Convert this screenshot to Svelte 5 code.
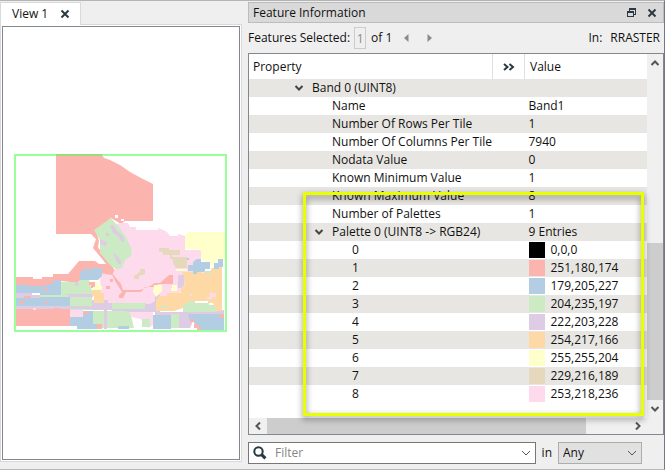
<script lang="ts">
	type Row = {
		name: string;
		value?: string;
		level: number;
		open?: boolean;
		color?: string;
	};

	const palette = [
		'0,0,0',
		'251,180,174',
		'179,205,227',
		'204,235,197',
		'222,203,228',
		'254,217,166',
		'255,255,204',
		'229,216,189',
		'253,218,236'
	];

	const rows: Row[] = [
		{ name: 'Band 0 (UINT8)', level: 1, open: true },
		{ name: 'Name', value: 'Band1', level: 2 },
		{ name: 'Number Of Rows Per Tile', value: '1', level: 2 },
		{ name: 'Number Of Columns Per Tile', value: '7940', level: 2 },
		{ name: 'Nodata Value', value: '0', level: 2 },
		{ name: 'Known Minimum Value', value: '1', level: 2 },
		{ name: 'Known Maximum Value', value: '8', level: 2 },
		{ name: 'Number of Palettes', value: '1', level: 2 },
		{ name: 'Palette 0 (UINT8 -> RGB24)', value: '9 Entries', level: 2, open: true },
		...palette.map((rgb, i) => ({ name: String(i), value: rgb, level: 3, color: `rgb(${rgb})` }))
	];

	let selected = $state('1');
	let filter = $state('');
	let scope = $state('Any');
</script>

{#snippet chevron(cls: string, d: string)}
	<svg class="line {cls}" width="10" height="10" viewBox="0 0 10 10" aria-hidden="true">
		<path {d} />
	</svg>
{/snippet}

<main class="workspace">
	<section class="view">
		<div class="tabs">
			<div class="tab">
				<span>View 1</span>
				<button class="icon" aria-label="Close view">
					<svg class="line" width="10" height="10" viewBox="0 0 10 10">
						<path d="M1.5 1.5 8.5 8.5M8.5 1.5 1.5 8.5" />
					</svg>
				</button>
			</div>
		</div>
		<div class="pane">
			<div class="canvas">
				<svg class="map" viewBox="14 153 213 178" role="img" aria-label="Raster preview">
					<!-- outlying land -->
					<path
						fill="#fbb4ae"
						d="M56 154H102L104 157 110 159 120 164 130 171 141 177 153 183V220H125L121 223 111 217 96 230 99 240 98 246 104 256 112 265 118 274 105 276 96 270 82 282 61 280 46 286H16V276H33V278H42V276H53V273H68L74 266 79 260H95L99 263H106L103 259 93 247 96 238 91 233H56Z"
					/>
					<path fill="#fddaec" d="M112 225 120 222H128L130 226H136V229H158V227L163 229 167 231 170 235H178V233L185 235V249H201V262L205 270 185 290 160 298 155 310H112L101 298 100 272 112 274 116 266Z" />
					<path fill="#ccebc5" d="M94 229 111 217 119 226 126 236 132 249 131 255 125 259 122 267 116 268 110 264 100 252V239Z" />
					<path fill="#decbe4" d="M110 224H113L117 230 122 234 125 241H122L118 235 113 232ZM100 238 107 241 106 245 100 243ZM113 252H115L121 260V263H118ZM106 232H109V235H106Z" />
					<path fill="#fff" d="M115 214H118V217H115ZM121 218H124V220H121Z" />
					<path fill="#ffffcc" d="M185 235 188 231H225V260H215V264H209L204 259H201V250L196 248H185Z" />

					<!-- west -->
					<path fill="#b3cde3" d="M16 284H28V285H46V283H53V279H61V294H40V292H16ZM16 296H70V307H16ZM80 271 84 269V267L90 269 92 267H102V275L98 279H80Z" />
					<path fill="#ccebc5" d="M61 281H77L80 279H89L92 290V309H70V296H61ZM38 294H61V296H38Z" />
					<path fill="#decbe4" d="M16 292H32V294H40V297H16ZM66 293H93V296H69V294H66ZM16 305H92V308H16ZM92 299H108V302H112V309H92ZM75 281H78V285H75Z" />
					<path fill="#fbb4ae" d="M16 308H54V307H60V308H70V325H16ZM45 286H47V291H45ZM24 295H31V297H24ZM20 300H24V303H20ZM45 300H48V302H45ZM89 281H95V287H91V284H89Z" />
					<path fill="#b3cde3" d="M70 316H83V310H93V323H97V328H77V325H70Z" />
					<path fill="#fddaec" d="M70 309H83V316H70ZM33 307H36V309H33Z" />
					<path fill="#fbb4ae" d="M84 310H88V313H84ZM45 323H52V325H45ZM110 278H113V281H110ZM106 285H110V288H106ZM111 271 121 283 123 289H140L150 285 155 282H160L169 274H173V283H158L156 286H145L141 291H126L123 297H119V294L122 291 115 280Z" />
					<path fill="#ffffcc" d="M95 281H99V285H102V289H93V286H95Z" />
					<path fill="#fed9a6" d="M92 289H101V292H104V302H94V295H92Z" />

					<!-- south -->
					<path fill="#ccebc5" d="M93 310H130L134 327H97V323H93ZM112 302H146L150 306V308H112Z" />
					<path fill="#decbe4" d="M104 308H107V328H104ZM112 308H145V303H150L155 300V294H160V311H183V309H224V316H195L190 327H178V314H155V311H128L125 310H112Z" />
					<path fill="#fddaec" d="M129 311H153V324L148 327 145 320 140 318 132 316Z" />
					<path fill="#ccebc5" d="M142 318H150V326H142ZM171 313H179V327H171Z" />
					<path fill="#b3cde3" d="M118 325H129V328H118ZM153 314H171V328H153Z" />
					<path fill="#fbb4ae" d="M97 323H102V328H97Z" />

					<!-- east -->
					<path fill="#fed9a6" d="M182 271H201V272H209L212 267 222 265V310H216L213 302H208V300H188V306L180 308 174 310H156V299L159 295H167V292H181V288L185 283Z" />
					<path fill="#decbe4" d="M178 274H184V284L181 287H178Z" />
					<path fill="#ffffcc" d="M154 284H162V290L156 296 153 291ZM172 284H177V290H171V287H172ZM176 268H187V270H176Z" />
					<path fill="#b3cde3" d="M186 257H189V259H186ZM193 261 197 258H201V261H210V268H205V271H197V273H193V270H188V264H193ZM214 262H218V258H223V266H219V268H214Z" />
					<path fill="#e5d8bd" d="M159 247H169V249H180V254H172V256H187V267H175V264H173V259L170 257V254H163V251H159ZM134 275 140 271V268H145V273L139 275V278H134Z" />
					<path fill="#ccebc5" d="M183 304 188 302V300H195V302H209V304H214L217 311H183ZM161 305H168V307H161ZM204 270H212V272H204Z" />
					<path fill="#b3cde3" d="M188 313H224V330H201L196 325 193 320H190Z" />
					<path fill="#fddaec" d="M210 292H216V296H212V298H207V296H210ZM190 293H192V295H190Z" />
					<path fill="#fbb4ae" d="M190 318H194V321H190ZM194 323H198V326H201V330H197V327H194ZM220 313H224V317H220Z" />
					<rect x="15" y="154" width="211" height="176" fill="none" stroke="#99ff99" stroke-width="2" />
					<path d="M56 154H102" fill="none" stroke="#9bdd79" stroke-width="2" />
				</svg>
			</div>
		</div>
	</section>

	<section class="info">
		<header class="titlebar">
			<h1>Feature Information</h1>
			<button class="icon" aria-label="Float panel">
				<svg width="10" height="10" viewBox="0 0 10 10" fill="#2b3a42">
					<path fill-rule="evenodd" d="M3 0H10V7H7V6H9V2H4V3H3Z" />
					<path fill-rule="evenodd" d="M1 3H8V9H1ZM2 5V8H7V5Z" />
				</svg>
			</button>
			<button class="icon" aria-label="Close panel">
				<svg class="line" width="10" height="10" viewBox="0 0 10 10">
					<path d="M1.5 1.5 8.5 8.5M8.5 1.5 1.5 8.5" />
				</svg>
			</button>
		</header>

		<div class="selection">
			<label for="selected">Features Selected:</label>
			<input id="selected" class="index" bind:value={selected} />
			<span>of 1</span>
			<button class="step prev" aria-label="Previous feature">
				<svg width="5" height="8" viewBox="0 0 5 8"><path d="M4.5 0V8L0 4Z" /></svg>
			</button>
			<button class="step next" aria-label="Next feature">
				<svg width="5" height="8" viewBox="0 0 5 8"><path d="M0.5 0V8L5 4Z" /></svg>
			</button>
			<span class="source">In:</span>
			<span>RRASTER</span>
		</div>

		<div class="tree">
			<table>
				<thead>
					<tr>
						<th>Property</th>
						<th class="more">
							<button class="icon" aria-label="Expand columns">
								<svg class="line" width="12" height="8" viewBox="0 0 12 8">
									<path d="M1 1 4.5 4 1 7M6.5 1 10 4 6.5 7" />
								</svg>
							</button>
						</th>
						<th class="val">Value</th>
					</tr>
				</thead>
				<tbody>
					{#each rows as row}
						<tr>
							<td class="level-{row.level}">
								{#if row.open}
									{@render chevron('twisty', 'M1.5 3 5 6.5 8.5 3')}
								{/if}
								{row.name}
							</td>
							<td></td>
							<td>
								<span class="value">
									{#if row.color}
										<i class="swatch" style="background: {row.color}"></i>
									{/if}
									{row.value ?? ''}
								</span>
							</td>
						</tr>
					{/each}
				</tbody>
			</table>
			<div class="scroll vertical">
				{@render chevron('arrow', 'M1.5 7 5 3.5 8.5 7')}
				<div class="track"><div class="thumb"></div></div>
				{@render chevron('arrow', 'M1.5 3 5 6.5 8.5 3')}
			</div>
			<div class="scroll horizontal">
				{@render chevron('arrow', 'M7 1.5 3.5 5 7 8.5')}
				<div class="track"><div class="thumb"></div></div>
				{@render chevron('arrow', 'M3 1.5 6.5 5 3 8.5')}
			</div>
			<div class="highlight"></div>
		</div>

		<div class="filterbar">
			<div class="filter">
				<svg class="search" width="14" height="14" viewBox="0 0 14 14" aria-hidden="true">
					<circle cx="5.5" cy="5.5" r="4.2" />
					<path d="M8.6 8.6 12.4 12.4" />
				</svg>
				<input aria-label="Filter" placeholder="Filter" bind:value={filter} />
				{@render chevron('drop', 'M1 3 5 7 9 3')}
			</div>
			<label for="scope">in</label>
			<div class="scope">
				<select id="scope" bind:value={scope}>
					<option>Any</option>
					<option>Property</option>
					<option>Value</option>
				</select>
				{@render chevron('drop', 'M1 3 5 7 9 3')}
			</div>
		</div>
	</section>
</main>

<style>
	:global(body) {
		margin: 0;
		background: #efefef;
	}
	.workspace {
		box-sizing: border-box;
		min-height: 100vh;
		display: grid;
		grid-template-columns: minmax(0, 242fr) minmax(0, 416fr);
		column-gap: 6px;
		border-top: 1px solid #b4b4b4;
		border-right: 1px solid #777785;
		border-bottom: 1px solid #b9b9b9;
		font: 12px/18px 'Open Sans', 'Noto Sans', sans-serif;
		color: #111;
	}
	button,
	input,
	select {
		font: inherit;
		color: inherit;
		margin: 0;
		padding: 0;
		border: 0;
		background: none;
		outline: none;
	}
	svg {
		display: block;
		flex: none;
	}
	.line {
		fill: none;
		stroke: #2b3a42;
		stroke-width: 2;
	}
	.icon {
		display: flex;
		align-items: center;
		justify-content: center;
	}

	/* View */
	.view {
		display: flex;
		flex-direction: column;
		padding: 1px 0 7px;
	}
	.tabs {
		display: flex;
	}
	.tab {
		display: flex;
		align-items: center;
		gap: 12px;
		height: 22px;
		padding: 0 10px 0 11px;
		border: 1px solid #d9d9d9;
		border-bottom: 0;
		background: #fff;
		position: relative;
		z-index: 1;
		margin-bottom: -1px;
	}
	.pane {
		flex: 1;
		display: flex;
		padding: 1px;
		border: 1px solid #d9d9d9;
		background: #fff;
	}
	.canvas {
		flex: 1;
		display: flex;
		align-items: center;
		padding: 0 12px 0 11px;
		border: 1px solid #828790;
	}
	.map {
		width: 100%;
		flex: 1;
	}

	/* Feature information */
	.info {
		display: flex;
		flex-direction: column;
		padding: 1px 0 5px;
	}
	.titlebar {
		display: flex;
		align-items: center;
		gap: 11px;
		height: 19px;
		padding: 0 6px 0 4px;
		border: 1px solid #bcbcbc;
		background: #d9d9d9;
	}
	.titlebar h1 {
		flex: 1;
		margin: 0;
		font: inherit;
	}
	.selection {
		display: flex;
		align-items: center;
		height: 30px;
		padding-right: 4px;
	}
	.index {
		box-sizing: border-box;
		width: 12px;
		height: 22px;
		margin: 0 5px 0 4px;
		border: 1px solid #ccc;
		color: #8a8a8a;
		text-align: center;
	}
	.step path {
		fill: #8a8a8a;
	}
	.prev {
		margin-left: 12px;
	}
	.next {
		margin-left: 18px;
	}
	.source {
		margin: 0 8px 0 auto;
	}

	.tree {
		position: relative;
		flex: 1;
		display: grid;
		grid-template-columns: minmax(0, 1fr) 16px;
		grid-template-rows: 1fr 16px;
		border: 1px solid #828790;
		background: #fff;
	}
	table {
		width: 100%;
		align-self: start;
		border-collapse: collapse;
		table-layout: fixed;
	}
	th {
		height: 25px;
		padding: 0 4px;
		font-weight: normal;
		text-align: left;
	}
	th.more {
		width: 23px;
		border: solid #e0e0e0;
		border-width: 0 1px;
	}
	.more .icon {
		width: 100%;
	}
	th.val {
		width: 113px;
		padding-left: 5px;
	}
	td {
		height: 18px;
		padding: 0 4px;
		white-space: nowrap;
	}
	tbody tr:nth-child(odd) {
		background: #e8e6e2;
	}
	.twisty {
		float: left;
		margin: 4px 8px 4px -18px;
		stroke: #444;
	}
	.level-1 {
		padding-left: 63px;
	}
	.level-2 {
		padding-left: 83px;
	}
	.level-3 {
		padding-left: 103px;
	}
	.value {
		display: flex;
		align-items: center;
		gap: 6px;
	}
	.swatch {
		width: 16px;
		height: 16px;
	}

	.scroll {
		display: flex;
		align-items: center;
		background: #f0f0f0;
	}
	.scroll.vertical {
		flex-direction: column;
		padding: 4px 0;
		gap: 4px;
	}
	.scroll.horizontal {
		grid-column: 1 / -1;
		padding: 0 20px 0 4px;
		gap: 4px;
	}
	.arrow {
		stroke: #555;
	}
	.track {
		flex: 1;
		align-self: stretch;
		display: flex;
	}
	.thumb {
		background: #cdcdcd;
	}
	.vertical .thumb {
		width: 100%;
		height: 48%;
		margin-top: auto;
	}
	.horizontal .thumb {
		width: 88%;
	}

	/* Callout round the palette entries */
	.highlight {
		position: absolute;
		inset: 138px 19px 18px 54px;
		border: 3px solid #e8ff00;
		filter: drop-shadow(0 3px 3px rgba(0, 0, 0, 0.5));
		pointer-events: none;
	}

	.filterbar {
		display: flex;
		align-items: center;
		gap: 6px;
		margin-top: 7px;
		padding-right: 22px;
	}
	.filter,
	.scope {
		box-sizing: border-box;
		display: flex;
		align-items: center;
		height: 22px;
		border: 1px solid #777;
		background: #fff;
	}
	.filter {
		flex: 1;
		padding: 0 4px;
		gap: 8px;
	}
	.filter input {
		flex: 1;
		min-width: 0;
	}
	.filter input::placeholder {
		color: #858585;
	}
	.search {
		fill: none;
		stroke: #263840;
		stroke-width: 2;
	}
	.search path {
		stroke-width: 3;
	}
	.scope {
		position: relative;
		width: 84px;
		border-color: #adadad;
		background: #e1e1e1;
	}
	.scope select {
		appearance: none;
		width: 100%;
		height: 100%;
		padding-left: 4px;
	}
	.scope .drop {
		position: absolute;
		right: 4px;
		pointer-events: none;
	}
	.drop {
		stroke: #555;
		stroke-width: 1;
	}
</style>
